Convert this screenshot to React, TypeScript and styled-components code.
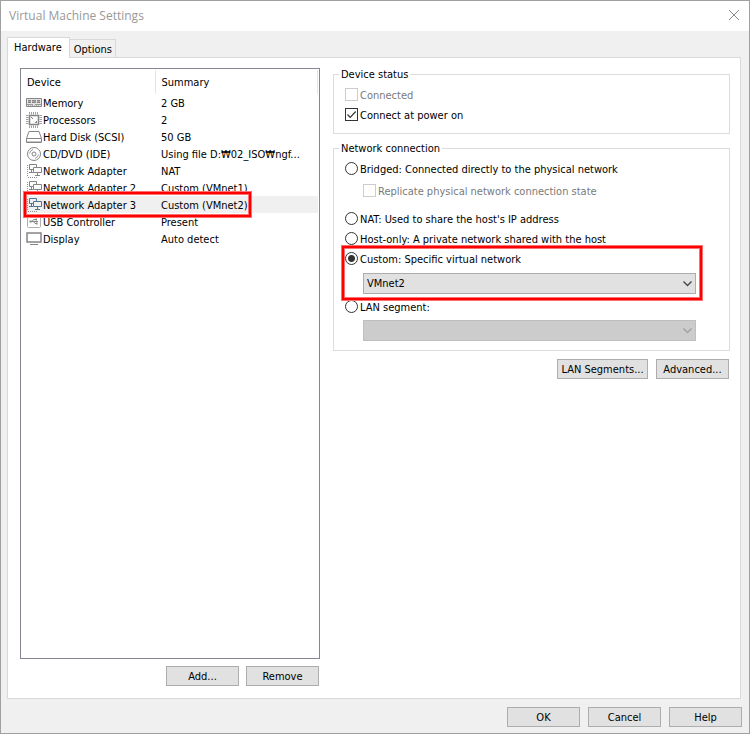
import React, { useState } from 'react';
import type { ReactNode } from 'react';
import styled, { createGlobalStyle, css } from 'styled-components';

const GlobalStyle = createGlobalStyle`
  * { box-sizing: border-box; }
  body { margin: 0; background: #f0f0f0; }
  body, button, input, select {
    font-family: 'DejaVu Sans Condensed', 'Noto Sans', 'Noto Sans CJK KR', sans-serif;
    font-size: 11px;
    line-height: 13px;
    color: #000;
  }
`;

const Dialog = styled.main`
  display: flex;
  flex-direction: column;
  min-height: 100vh;
  border: 1px solid #a0a0a0;
  background: #f0f0f0;
`;

const TitleBar = styled.header`
  display: flex;
  align-items: center;
  justify-content: space-between;
  height: 30px;
  padding: 0 9px 2px 8px;
  background: #fff;
`;

const Title = styled.h1`
  margin: 0;
  font: 400 12px 'Open Sans', 'Noto Sans', sans-serif;
  color: #999;
`;

const CloseButton = styled.button`
  display: flex;
  padding: 0;
  border: 0;
  background: none;
`;

const TabList = styled.div`
  display: flex;
  align-items: flex-end;
  padding: 6px 6px 0;
`;

const Tab = styled.button<{ $active?: boolean }>`
  position: relative;
  padding: 1px 3px 0 4px;
  height: 18px;
  border: 1px solid #d9d9d9;
  border-width: 1px 1px 0 0;
  background: #f0f0f0;
  white-space: nowrap;

  ${p => p.$active && css`
    z-index: 1;
    height: 21px;
    margin-bottom: -1px;
    padding: 0 7px 2px 6px;
    border-left-width: 1px;
    background: #fff;
  `}
`;

const TabPanel = styled.section`
  flex: 1;
  display: grid;
  grid-template-columns: 300px minmax(0, 1fr);
  column-gap: 13px;
  margin: 0 8px 0 6px;
  padding: 10px 10px 12px 12px;
  border: 1px solid #d9d9d9;
  background: #fff;
`;

const Column = styled.div`
  display: flex;
  flex-direction: column;
`;

const DeviceBox = styled.div`
  flex: 1;
  border: 1px solid #828790;
  padding: 1px;
`;

const DeviceTable = styled.table`
  width: 100%;
  table-layout: fixed;
  border-collapse: collapse;

  td, th { padding: 0; text-align: left; font-weight: 400; white-space: nowrap; }
  th { height: 24px; padding-left: 5px; border-right: 1px solid #e5e5e5; }
  th:first-child { width: 133px; }
  th:last-child { padding-left: 6px; }
`;

const DeviceRow = styled.tr<{ $selected?: boolean }>`
  height: 17px;
  background: ${p => (p.$selected ? '#f0f0f0' : 'transparent')};

  td:first-child { position: relative; padding-left: 4px; }
  td:last-child { padding: 2px 0 0 6px; overflow: hidden; text-overflow: ellipsis; }
`;

const DeviceName = styled.span`
  display: flex;
  align-items: center;
  gap: 1px;
  height: 17px;
`;

const Caption = styled.span`
  padding-top: 2px;
`;

const Highlight = styled.span`
  position: absolute;
  z-index: 2;
  border: 2px solid #f00;
  box-shadow: 0 0 0 1px #ff7070, inset 0 0 0 1px #ff7070;
  pointer-events: none;
`;

const RowHighlight = styled(Highlight)`
  left: 2px;
  top: -4px;
  width: 227px;
  height: 25px;
`;

const GroupHighlight = styled(Highlight)`
  inset: -2px 17px -6px -3px;
`;

const ButtonRow = styled.div<{ $gap: number }>`
  display: flex;
  justify-content: flex-end;
  gap: ${p => p.$gap}px;
  padding: ${p => p.$gap}px 1px 0 0;
`;

const PushButton = styled.button<{ $wide?: boolean }>`
  min-width: ${p => (p.$wide ? 91 : 73)}px;
  height: 20px;
  padding: 0 3px;
  border: 1px solid #adadad;
  background: #e1e1e1;
  white-space: nowrap;
`;

const Group = styled.fieldset`
  min-width: 0;
  margin: 0;
  padding: 3px 10px 9px 11px;
  border: 1px solid #dcdcdc;

  legend { margin-left: -6px; padding: 0 2px; }
  & + & { margin-top: 8px; }
`;

const Option = styled.label<{ $indent?: boolean; $disabled?: boolean }>`
  display: flex;
  align-items: center;
  gap: 2px;
  height: 20px;
  margin-left: ${p => (p.$indent ? 18 : 0)}px;
  color: ${p => (p.$disabled ? '#7a7a7a' : '#000')};
  white-space: nowrap;
`;

const checkMark = `url("data:image/svg+xml,%3Csvg xmlns='http://www.w3.org/2000/svg' viewBox='0 0 11 11'%3E%3Cpath d='M1.5 5.5 4.2 8.3 9.7 2.5' fill='none' stroke='%23333' stroke-width='1.2'/%3E%3C/svg%3E")`;

const Check = styled.input.attrs({ type: 'checkbox' })`
  appearance: none;
  flex: none;
  width: 13px;
  height: 13px;
  margin: 0;
  border: 1px solid #333;
  background: #fff;
  &:checked { background-image: ${checkMark}; }
  &:disabled { border-color: #ccc; }
`;

const Radio = styled.input.attrs({ type: 'radio' })`
  appearance: none;
  flex: none;
  width: 13px;
  height: 13px;
  margin: 0;
  border: 1px solid #333;
  border-radius: 50%;
  background: #fff;
  &:checked { background: radial-gradient(circle, #333 3px, #fff 4px); }
`;

const NestedOption = styled.div`
  padding: 2px 0 8px;
`;

const CustomGroup = styled.div`
  position: relative;
`;

const SelectWrap = styled.div<{ $last?: boolean }>`
  position: relative;
  margin: ${p => (p.$last ? '4px 23px 0 18px' : '5px 23px 2px 18px')};

  svg { position: absolute; right: 4px; top: 8px; pointer-events: none; }
`;

const Select = styled.select`
  appearance: none;
  display: block;
  width: 100%;
  height: 21px;
  padding: 0 20px 0 3px;
  border: 1px solid #adadad;
  border-radius: 0;
  background: #e1e1e1;
  opacity: 1;
  &:disabled { border-color: #bfbfbf; background: #ccc; }
`;

const Actions = styled.footer`
  display: flex;
  justify-content: flex-end;
  gap: 8px;
  padding: 8px 7px 6px;
`;

const Glyph = styled.svg`
  flex: none;
  fill: none;
  stroke: #858585;
`;

const Icon = ({ children }: { children: ReactNode }) => (
  <Glyph width="16" height="16" viewBox="0 0 16 16" aria-hidden="true">{children}</Glyph>
);

const MemoryIcon = () => (
  <Icon>
    <path d="M.5 3.5h15v8H.5z" fill="#e4e4e4" />
    <path d="M2 5.5h3M6 5.5h4M11 5.5h3M2 7.5h3M6 7.5h4M11 7.5h3" />
    <path d="M2 6.5h3M6 6.5h4M11 6.5h3" stroke="#a8a8a8" />
    <path d="M1 9.5h6M9 9.5h6" stroke="#999" />
    <path d="M2 10.5h12" strokeDasharray="1 1" stroke="#b0b0b0" />
  </Icon>
);

const ProcessorIcon = () => (
  <Icon>
    <rect x="3.5" y="3.5" width="9" height="9" strokeWidth="1.5" />
    <path stroke="#a0a0a0" d="M3.5 0v2.500M5.500 0v2.500M7.500 0v2.500M9.500 0v2.500M11.500 0v2.500M3.500 13.500v2.500M5.500 13.500v2.500M7.500 13.500v2.500M9.500 13.500v2.500M11.500 13.500v2.500M0 3.500h2.500M0 5.500h2.500M0 7.500h2.500M0 9.500h2.500M0 11.500h2.500M13.500 3.500h2.500M13.500 5.500h2.500M13.500 7.500h2.500M13.500 9.500h2.500M13.500 11.500h2.500" />
    <path d="M5 5.500h1M6 6.500h1M9 10.500h2M10.500 9v1" />
  </Icon>
);

const DiskIcon = () => (
  <Icon>
    <path d="M.5 9.500 3 2.500h10l2.500 7v4H.5zM.5 9.500h15" />
    <path d="M1 12.500h14" stroke="#c4c4c4" />
  </Icon>
);

const DiscIcon = () => (
  <Icon>
    <circle cx="8" cy="8" r="6.500" />
    <circle cx="8" cy="8" r="2" />
    <path d="M3.500 7.500Q4 4.500 7 3.500M12.500 8.500Q12 11.500 9 12.500" stroke="#a0a0a0" />
  </Icon>
);

const NetworkIcon = ({ selected }: { selected?: boolean }) => (
  <Icon>
    <g stroke={selected ? '#4f7690' : '#858585'}>
      <path d="M7 6.500H3.500v-5h7V4M5.500 7v2M3 9.500h4" />
      <path d="M7.500 4.500h8v5h-8zM11.500 10v2M9 12.500h5" />
      <path d="M1.500 2v12M2 14.500h9" strokeDasharray="1 1" stroke="#909090" />
    </g>
  </Icon>
);

const UsbIcon = () => (
  <Icon>
    <rect x="1.500" y="1.500" width="13" height="12" rx="1" stroke="#b0b0b0" />
    <path d="M4 7.500h8M6 7.500l1.500-2H10M7.500 7.500l1.500 2h2" />
    <path d="M3.500 7.500h2M9.500 5.500H11M10 9.500h1.500" strokeWidth="2" />
  </Icon>
);

const DisplayIcon = () => (
  <Icon>
    <rect x="1" y="2" width="14" height="9" strokeWidth="1.500" />
    <path d="M4 13.500h8" />
  </Icon>
);

const Chevron = ({ color }: { color: string }) => (
  <svg width="9" height="6" viewBox="0 0 9 6" fill="none" stroke={color} strokeWidth="1.300" aria-hidden="true">
    <path d="M.5.5l4 4 4-4" />
  </svg>
);

const devices: { name: string; summary: string; icon: ReactNode; selected?: boolean }[] = [
  { name: 'Memory', summary: '2 GB', icon: <MemoryIcon /> },
  { name: 'Processors', summary: '2', icon: <ProcessorIcon /> },
  { name: 'Hard Disk (SCSI)', summary: '50 GB', icon: <DiskIcon /> },
  { name: 'CD/DVD (IDE)', summary: 'Using file D:₩02_ISO₩ngf...', icon: <DiscIcon /> },
  { name: 'Network Adapter', summary: 'NAT', icon: <NetworkIcon /> },
  { name: 'Network Adapter 2', summary: 'Custom (VMnet1)', icon: <NetworkIcon /> },
  { name: 'Network Adapter 3', summary: 'Custom (VMnet2)', icon: <NetworkIcon selected />, selected: true },
  { name: 'USB Controller', summary: 'Present', icon: <UsbIcon /> },
  { name: 'Display', summary: 'Auto detect', icon: <DisplayIcon /> },
];

export default function App() {
  const [mode, setMode] = useState('custom');
  const [powerOn, setPowerOn] = useState(true);
  const choice = (value: string, text: string) => (
    <Option>
      <Radio name="network" value={value} checked={mode === value} onChange={() => setMode(value)} />
      <Caption>{text}</Caption>
    </Option>
  );

  return (
    <>
      <GlobalStyle />
      <Dialog>
        <TitleBar>
          <Title>Virtual Machine Settings</Title>
          <CloseButton aria-label="Close">
            <svg width="12" height="12" viewBox="0 0 12 12" fill="none" stroke="#8a8a8a">
              <path d="M1 1l10 10M11 1 1 11" />
            </svg>
          </CloseButton>
        </TitleBar>
        <TabList role="tablist">
          <Tab role="tab" aria-selected="true" $active>Hardware</Tab>
          <Tab role="tab" aria-selected="false">Options</Tab>
        </TabList>
        <TabPanel role="tabpanel">
          <Column>
            <DeviceBox>
              <DeviceTable>
                <thead>
                  <tr><th>Device</th><th>Summary</th></tr>
                </thead>
                <tbody>
                  {devices.map(d => (
                    <DeviceRow key={d.name} $selected={d.selected}>
                      <td>
                        <DeviceName>{d.icon}<Caption>{d.name}</Caption></DeviceName>
                        {d.selected && <RowHighlight />}
                      </td>
                      <td>{d.summary}</td>
                    </DeviceRow>
                  ))}
                </tbody>
              </DeviceTable>
            </DeviceBox>
            <ButtonRow $gap={7}>
              <PushButton>Add...</PushButton>
              <PushButton>Remove</PushButton>
            </ButtonRow>
          </Column>
          <Column>
            <Group>
              <legend>Device status</legend>
              <Option $disabled><Check disabled /><Caption>Connected</Caption></Option>
              <Option>
                <Check checked={powerOn} onChange={e => setPowerOn(e.target.checked)} />
                <Caption>Connect at power on</Caption>
              </Option>
            </Group>
            <Group>
              <legend>Network connection</legend>
              {choice('bridged', 'Bridged: Connected directly to the physical network')}
              <NestedOption>
                <Option $indent $disabled>
                  <Check disabled /><Caption>Replicate physical network connection state</Caption>
                </Option>
              </NestedOption>
              {choice('nat', "NAT: Used to share the host's IP address")}
              {choice('host', 'Host-only: A private network shared with the host')}
              <CustomGroup>
                {choice('custom', 'Custom: Specific virtual network')}
                <SelectWrap>
                  <Select aria-label="Specific virtual network" defaultValue="VMnet2">
                    <option>VMnet1</option>
                    <option>VMnet2</option>
                  </Select>
                  <Chevron color="#444" />
                </SelectWrap>
                <GroupHighlight />
              </CustomGroup>
              {choice('lan', 'LAN segment:')}
              <SelectWrap $last>
                <Select aria-label="LAN segment" disabled />
                <Chevron color="#a0a0a0" />
              </SelectWrap>
            </Group>
            <ButtonRow $gap={8}>
              <PushButton $wide>LAN Segments...</PushButton>
              <PushButton>Advanced...</PushButton>
            </ButtonRow>
          </Column>
        </TabPanel>
        <Actions>
          <PushButton>OK</PushButton>
          <PushButton>Cancel</PushButton>
          <PushButton>Help</PushButton>
        </Actions>
      </Dialog>
    </>
  );
}
